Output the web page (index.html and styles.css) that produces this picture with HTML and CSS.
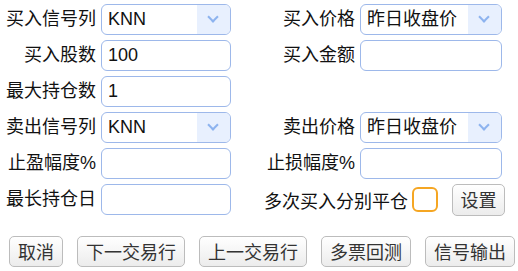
FILE: index.html
```html
<!DOCTYPE html>
<html lang="zh">
<head>
  <meta charset="UTF-8">
  <title>交易设置</title>
  <link rel="stylesheet" href="styles.css">
</head>
<body>

<div class="form">
  <label class="lbl">买入信号列</label>
  <div class="sel"><span>KNN</span><i class="arrow"></i></div>
  <label class="lbl">买入价格</label>
  <div class="sel"><span>昨日收盘价</span><i class="arrow"></i></div>

  <label class="lbl">买入股数</label>
  <div class="txt">100</div>
  <label class="lbl">买入金额</label>
  <div class="txt"></div>

  <label class="lbl">最大持仓数</label>
  <div class="txt">1</div>
  <div></div>
  <div></div>

  <label class="lbl">卖出信号列</label>
  <div class="sel"><span>KNN</span><i class="arrow"></i></div>
  <label class="lbl">卖出价格</label>
  <div class="sel"><span>昨日收盘价</span><i class="arrow"></i></div>

  <label class="lbl">止盈幅度%</label>
  <div class="txt"></div>
  <label class="lbl">止损幅度%</label>
  <div class="txt"></div>

  <label class="lbl">最长持仓日</label>
  <div class="txt"></div>
  <div class="multi">
    <span>多次买入分别平仓</span>
    <span class="check"></span>
    <button class="btn setbtn">设置</button>
  </div>
</div>

<div class="actions">
  <button class="btn">取消</button>
  <button class="btn">下一交易行</button>
  <button class="btn">上一交易行</button>
  <button class="btn">多票回测</button>
  <button class="btn">信号输出</button>
</div>

</body>
</html>
```

FILE: styles.css
```css
body {
  margin: 0;
  font-family: "Liberation Sans", "Noto Sans CJK SC", sans-serif;
  font-size: 18px;
  color: #111;
  background: #fff;
}
.form {
  display: grid;
  grid-template-columns: 96px 130px 119px 142px;
  grid-auto-rows: 31px;
  column-gap: 5px;
  row-gap: 5px;
  padding: 4px 16px 0 0;
}
.lbl {
  text-align: right;
  line-height: 31px;
  white-space: nowrap;
}
.txt, .sel {
  box-sizing: border-box;
  border: 1px solid #9db8ea;
  border-radius: 6px;
  height: 31px;
  line-height: 29px;
  padding-left: 6px;
  background: #fff;
}
.sel {
  display: flex;
  justify-content: space-between;
  overflow: hidden;
  padding-left: 6px;
}
.arrow {
  width: 33px;
  background: #e8f0fe;
  position: relative;
}
.arrow::after {
  content: "";
  position: absolute;
  left: 12px;
  top: 8px;
  width: 6px;
  height: 6px;
  border-right: 2px solid #8db3ef;
  border-bottom: 2px solid #8db3ef;
  transform: rotate(45deg);
}
.multi {
  grid-column: 3 / 5;
  display: flex;
  align-items: center;
  justify-content: flex-end;
  margin-right: -3px;
  white-space: nowrap;
}
.check {
  box-sizing: border-box;
  width: 26px;
  height: 25px;
  border: 2px solid #f5a623;
  border-radius: 6px;
  margin: 0 14px 0 4px;
}
.btn {
  font-family: "Noto Sans CJK SC", sans-serif;
  font-size: 18px;
  color: #333;
  height: 31px;
  line-height: 29px;
  padding: 0 8px;
  border: 1px solid #bcbcbc;
  border-radius: 5px;
  background: linear-gradient(#ffffff, #ececec);
}
.setbtn {
  height: 32px;
  width: 53px;
  padding: 0;
}
.actions {
  display: flex;
  gap: 14px;
  padding: 21px 0 0 9px;
}
```
